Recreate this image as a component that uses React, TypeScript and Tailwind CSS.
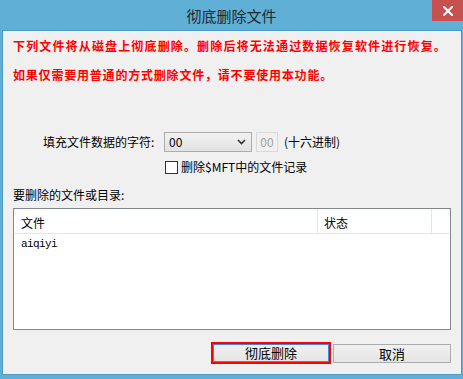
import React from "react"

const cjk = { fontFamily: '"Noto Sans CJK SC", "Microsoft YaHei", sans-serif' }
const mono = { fontFamily: '"Liberation Mono", "Noto Sans CJK SC", monospace' }

const CloseIcon = () => (
  <svg width="10" height="10" viewBox="0 0 10 10">
    <path d="M1 1 L9 9 M9 1 L1 9" stroke="white" strokeWidth="2" strokeLinecap="square" />
  </svg>
)

const Chevron = () => (
  <svg width="9" height="6" viewBox="0 0 9 6">
    <path d="M1 1 L4.5 4.5 L8 1" stroke="#333" strokeWidth="1.6" fill="none" />
  </svg>
)

export default function App() {
  return (
    <div className="w-[463px] h-[379px] bg-[#60afd7] flex flex-col" style={cjk}>
      <div className="h-[30px] flex items-center justify-center relative shrink-0">
        <span className="text-[15px] text-[#1e2a30] leading-none mt-[1px]">彻底删除文件</span>
        <div className="absolute right-0 top-0 w-[31px] h-[21px] bg-[#c75050] flex items-center justify-center">
          <CloseIcon />
        </div>
      </div>

      <div className="flex-1 ml-[2px] mr-[1px] mb-[4px] bg-[#f0f0f0] border border-[#4d9cc7] flex flex-col pl-[10px] pr-[8px] pt-[7px] text-[12px] text-[#000]">
        <div className="h-[16px] leading-[16px] font-bold text-[#ff0000] tracking-[1.15px]">
          下列文件将从磁盘上彻底删除。删除后将无法通过数据恢复软件进行恢复。
        </div>
        <div className="mt-[13px] h-[16px] leading-[16px] font-bold text-[#ff0000] tracking-[0.8px]">
          如果仅需要用普通的方式删除文件，请不要使用本功能。
        </div>

        <div className="mt-[49px] h-[20px] flex items-center">
          <span className="ml-[30px] w-[121px]">填充文件数据的字符:</span>
          <div className="w-[88px] h-[20px] border border-[#acacac] bg-gradient-to-b from-[#f2f2f2] to-[#e2e2e2] flex items-center justify-between pl-[4px] pr-[5px]">
            <span className="text-[12px]">00</span>
            <Chevron />
          </div>
          <div className="ml-[4px] w-[22px] h-[20px] border border-[#d9d9d9] flex items-center justify-center text-[#a0a0a0] text-[12px]">
            00
          </div>
          <span className="ml-[6px]">(十六进制)</span>
        </div>

        <div className="mt-[8px] h-[14px] flex items-center">
          <div className="ml-[152px] w-[13px] h-[13px] border border-[#333] bg-white" />
          <span className="ml-[3px]">删除$MFT中的文件记录</span>
        </div>

        <div className="mt-[13px] h-[16px] leading-[16px]">要删除的文件或目录:</div>

        <div className="mt-[5px] h-[122px] w-[438px] border border-[#828790] bg-white flex flex-col">
          <div className="h-[25px] flex border-b border-[#e5e5e5]">
            <div className="w-[304px] h-full border-r border-[#e5e5e5] flex items-center pl-[7px] pt-[3px]">文件</div>
            <div className="w-[114px] h-full border-r border-[#e5e5e5] flex items-center pl-[6px] pt-[3px]">状态</div>
          </div>
          <div className="h-[18px] flex items-center pl-[7px] pt-[2px] text-[11px] tracking-[-0.6px]" style={mono}>
            aiqiyi
          </div>
        </div>

        <div className="mt-[12px] flex justify-end">
          <div className="w-[120px] h-[22px] border-2 border-[#ff0000]">
            <div className="w-full h-full border border-[#3c8ad8] bg-gradient-to-b from-[#f0f0f0] to-[#e5e5e5] flex items-center justify-center text-[13px]">
              彻底删除
            </div>
          </div>
          <div className="ml-[2px] mt-[2px] w-[118px] h-[19px] border border-[#acacac] bg-gradient-to-b from-[#f0f0f0] to-[#e5e5e5] flex items-center justify-center text-[13px]">
            取消
          </div>
          <div className="w-[2px]" />
        </div>
      </div>
    </div>
  )
}
